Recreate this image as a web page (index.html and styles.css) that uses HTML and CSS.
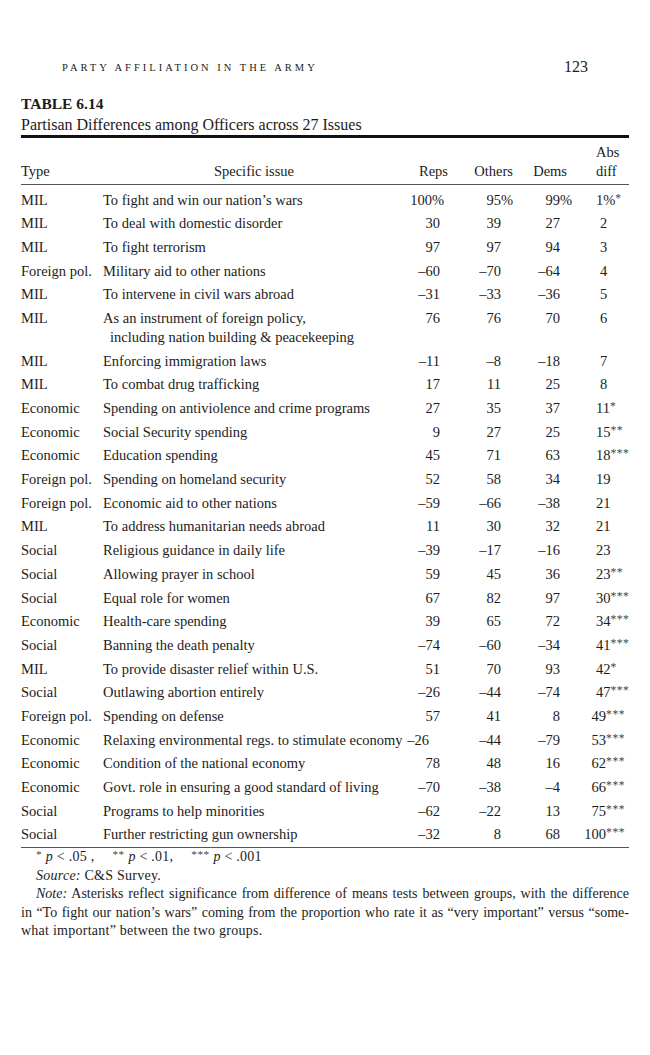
FILE: index.html
```html
<!DOCTYPE html>
<html lang="en">

<head>
    <meta charset="UTF-8">
    <meta name="viewport" content="width=device-width, initial-scale=1.0">
    <title>Table 6.14</title>
    <link rel="stylesheet" href="styles.css">
</head>

<body>
    <div class="page">
        <div class="running-head">
            <span class="chapter">Party affiliation in the army</span>
            <span class="folio">123</span>
        </div>

        <div class="caption">
            <div class="label">TABLE 6.14</div>
            <div class="title">Partisan Differences among Officers across 27 Issues</div>
        </div>

        <table class="issues">
            <colgroup>
                <col class="c-type">
                <col class="c-issue">
                <col class="c-reps">
                <col class="c-others">
                <col class="c-dems">
                <col class="c-abs">
            </colgroup>
            <thead>
                <tr>
                    <th class="type">Type</th>
                    <th class="issue">Specific issue</th>
                    <th class="num">Reps</th>
                    <th class="num">Others</th>
                    <th class="num">Dems</th>
                    <th class="abs">Abs<br>diff</th>
                </tr>
            </thead>
            <tbody>
                <tr><td>MIL</td><td>To fight and win our nation’s wars</td><td class="num reps">100<span class="pct">%</span></td><td class="num others">95<span class="pct">%</span></td><td class="num dems">99<span class="pct">%</span></td><td class="abs">1%<span class="sig">*</span></td></tr>
                <tr><td>MIL</td><td>To deal with domestic disorder</td><td class="num reps">30</td><td class="num others">39</td><td class="num dems">27</td><td class="abs one">2</td></tr>
                <tr><td>MIL</td><td>To fight terrorism</td><td class="num reps">97</td><td class="num others">97</td><td class="num dems">94</td><td class="abs one">3</td></tr>
                <tr><td>Foreign pol.</td><td>Military aid to other nations</td><td class="num reps">–60</td><td class="num others">–70</td><td class="num dems">–64</td><td class="abs one">4</td></tr>
                <tr><td>MIL</td><td>To intervene in civil wars abroad</td><td class="num reps">–31</td><td class="num others">–33</td><td class="num dems">–36</td><td class="abs one">5</td></tr>
                <tr><td>MIL</td><td>As an instrument of foreign policy,<br><span class="runover">including nation building &amp; peacekeeping</span></td><td class="num reps">76</td><td class="num others">76</td><td class="num dems">70</td><td class="abs one">6</td></tr>
                <tr><td>MIL</td><td>Enforcing immigration laws</td><td class="num reps">–11</td><td class="num others">–8</td><td class="num dems">–18</td><td class="abs one">7</td></tr>
                <tr><td>MIL</td><td>To combat drug trafficking</td><td class="num reps">17</td><td class="num others">11</td><td class="num dems">25</td><td class="abs one">8</td></tr>
                <tr><td>Economic</td><td>Spending on antiviolence and crime programs</td><td class="num reps">27</td><td class="num others">35</td><td class="num dems">37</td><td class="abs">11<span class="sig">*</span></td></tr>
                <tr><td>Economic</td><td>Social Security spending</td><td class="num reps">9</td><td class="num others">27</td><td class="num dems">25</td><td class="abs">15<span class="sig">**</span></td></tr>
                <tr><td>Economic</td><td>Education spending</td><td class="num reps">45</td><td class="num others">71</td><td class="num dems">63</td><td class="abs">18<span class="sig">***</span></td></tr>
                <tr><td>Foreign pol.</td><td>Spending on homeland security</td><td class="num reps">52</td><td class="num others">58</td><td class="num dems">34</td><td class="abs">19</td></tr>
                <tr><td>Foreign pol.</td><td>Economic aid to other nations</td><td class="num reps">–59</td><td class="num others">–66</td><td class="num dems">–38</td><td class="abs">21</td></tr>
                <tr><td>MIL</td><td>To address humanitarian needs abroad</td><td class="num reps">11</td><td class="num others">30</td><td class="num dems">32</td><td class="abs">21</td></tr>
                <tr><td>Social</td><td>Religious guidance in daily life</td><td class="num reps">–39</td><td class="num others">–17</td><td class="num dems">–16</td><td class="abs">23</td></tr>
                <tr><td>Social</td><td>Allowing prayer in school</td><td class="num reps">59</td><td class="num others">45</td><td class="num dems">36</td><td class="abs">23<span class="sig">**</span></td></tr>
                <tr><td>Social</td><td>Equal role for women</td><td class="num reps">67</td><td class="num others">82</td><td class="num dems">97</td><td class="abs">30<span class="sig">***</span></td></tr>
                <tr><td>Economic</td><td>Health-care spending</td><td class="num reps">39</td><td class="num others">65</td><td class="num dems">72</td><td class="abs">34<span class="sig">***</span></td></tr>
                <tr><td>Social</td><td>Banning the death penalty</td><td class="num reps">–74</td><td class="num others">–60</td><td class="num dems">–34</td><td class="abs">41<span class="sig">***</span></td></tr>
                <tr><td>MIL</td><td>To provide disaster relief within U.S.</td><td class="num reps">51</td><td class="num others">70</td><td class="num dems">93</td><td class="abs">42<span class="sig">*</span></td></tr>
                <tr><td>Social</td><td>Outlawing abortion entirely</td><td class="num reps">–26</td><td class="num others">–44</td><td class="num dems">–74</td><td class="abs">47<span class="sig">***</span></td></tr>
                <tr><td>Foreign pol.</td><td>Spending on defense</td><td class="num reps">57</td><td class="num others">41</td><td class="num dems">8</td><td class="abs right">49<span class="sig">***</span></td></tr>
                <tr><td>Economic</td><td>Relaxing environmental regs. to stimulate economy</td><td class="num reps tight">–26</td><td class="num others">–44</td><td class="num dems">–79</td><td class="abs right">53<span class="sig">***</span></td></tr>
                <tr><td>Economic</td><td>Condition of the national economy</td><td class="num reps">78</td><td class="num others">48</td><td class="num dems">16</td><td class="abs right">62<span class="sig">***</span></td></tr>
                <tr><td>Economic</td><td>Govt. role in ensuring a good standard of living</td><td class="num reps">–70</td><td class="num others">–38</td><td class="num dems">–4</td><td class="abs right">66<span class="sig">***</span></td></tr>
                <tr><td>Social</td><td>Programs to help minorities</td><td class="num reps">–62</td><td class="num others">–22</td><td class="num dems">13</td><td class="abs right">75<span class="sig">***</span></td></tr>
                <tr><td>Social</td><td>Further restricting gun ownership</td><td class="num reps">–32</td><td class="num others">8</td><td class="num dems">68</td><td class="abs right">100<span class="sig">***</span></td></tr>
            </tbody>
        </table>

        <div class="notes">
            <div class="indent loose"><span class="sig">*</span> <i>p</i> &lt; .05 ,<span class="gap"></span><span class="sig">**</span> <i>p</i> &lt; .01,<span class="gap"></span><span class="sig">***</span> <i>p</i> &lt; .001</div>
            <div class="indent loose"><i>Source:</i> C&amp;S Survey.</div>
            <div class="indent just"><i>Note:</i> Asterisks reflect significance from difference of means tests between groups, with the difference</div>
            <div class="just">in “To fight our nation’s wars” coming from the proportion who rate it as “very important” versus “some-</div>
            <div class="loose">what important” between the two groups.</div>
        </div>
    </div>
</body>

</html>
```

FILE: styles.css
```css
body {
    margin: 0;
    background-color: #fff;
    color: #1c1c1c;
    font-family: "Liberation Serif", "DejaVu Serif", serif;
}

.page {
    width: 608px;
    padding: 57px 21px 0 21px;
}

/* running head */
.running-head {
    display: flex;
    justify-content: space-between;
    align-items: center;
    height: 20px;
    padding: 0 41px 0 41px;
}

.chapter {
    text-transform: uppercase;
    font-size: 10.5px;
    letter-spacing: 3px;
}

.folio {
    font-size: 16px;
}

/* caption */
.caption {
    margin-top: 16px;
}

.label {
    font-size: 15.5px;
    font-weight: bold;
    line-height: 21px;
}

.title {
    font-size: 16px;
    line-height: 21px;
}

/* table */
.issues {
    width: 608px;
    table-layout: fixed;
    border-collapse: collapse;
    border-top: 3px solid #111;
    border-bottom: 1px solid #555;
    font-size: 14.5px;
}

.c-type { width: 82px; }
.c-issue { width: 302px; }
.c-reps { width: 43px; }
.c-others { width: 65px; }
.c-dems { width: 54px; }
.c-abs { width: 62px; }

.issues th {
    font-weight: normal;
    line-height: 19px;
    vertical-align: bottom;
    padding: 5px 0 3px 0;
    border-bottom: 1px solid #555;
    text-align: left;
}

.issues th.issue {
    text-align: center;
}

.issues th.num {
    text-align: right;
}

.issues td {
    line-height: 19px;
    padding: 2.35px 0 2.35px 0;
    vertical-align: top;
    white-space: nowrap;
}

.issues tbody tr:first-child td {
    padding-top: 5.5px;
}

.issues tbody tr:last-child td {
    padding-bottom: 3px;
}

.issues td.num {
    text-align: right;
}

.issues td.reps { padding-right: 8px; }
.issues td.reps.tight { padding-right: 19px; }
.issues td.others { padding-right: 12px; }
.issues td.dems { padding-right: 7px; }

.issues .abs {
    padding-left: 29px;
}

.issues td.one {
    padding-left: 33px;
}

.issues td.right {
    text-align: right;
    padding-left: 0;
    padding-right: 4px;
}

.pct {
    margin-right: -12px;
}

.reps .pct {
    margin-right: -4px;
}

.runover {
    padding-left: 7px;
}

.sig {
    font-size: 0.8em;
    line-height: 0;
    letter-spacing: 0.5px;
    vertical-align: 3px;
    color: #444;
}

/* notes */
.notes {
    font-size: 14px;
    line-height: 18.4px;
    padding-top: 0;
}

.notes .indent {
    padding-left: 15px;
}

.notes .loose {
    letter-spacing: 0.25px;
}

.notes .gap {
    display: inline-block;
    width: 18px;
}

.notes .just {
    text-align: justify;
    text-align-last: justify;
}
```
